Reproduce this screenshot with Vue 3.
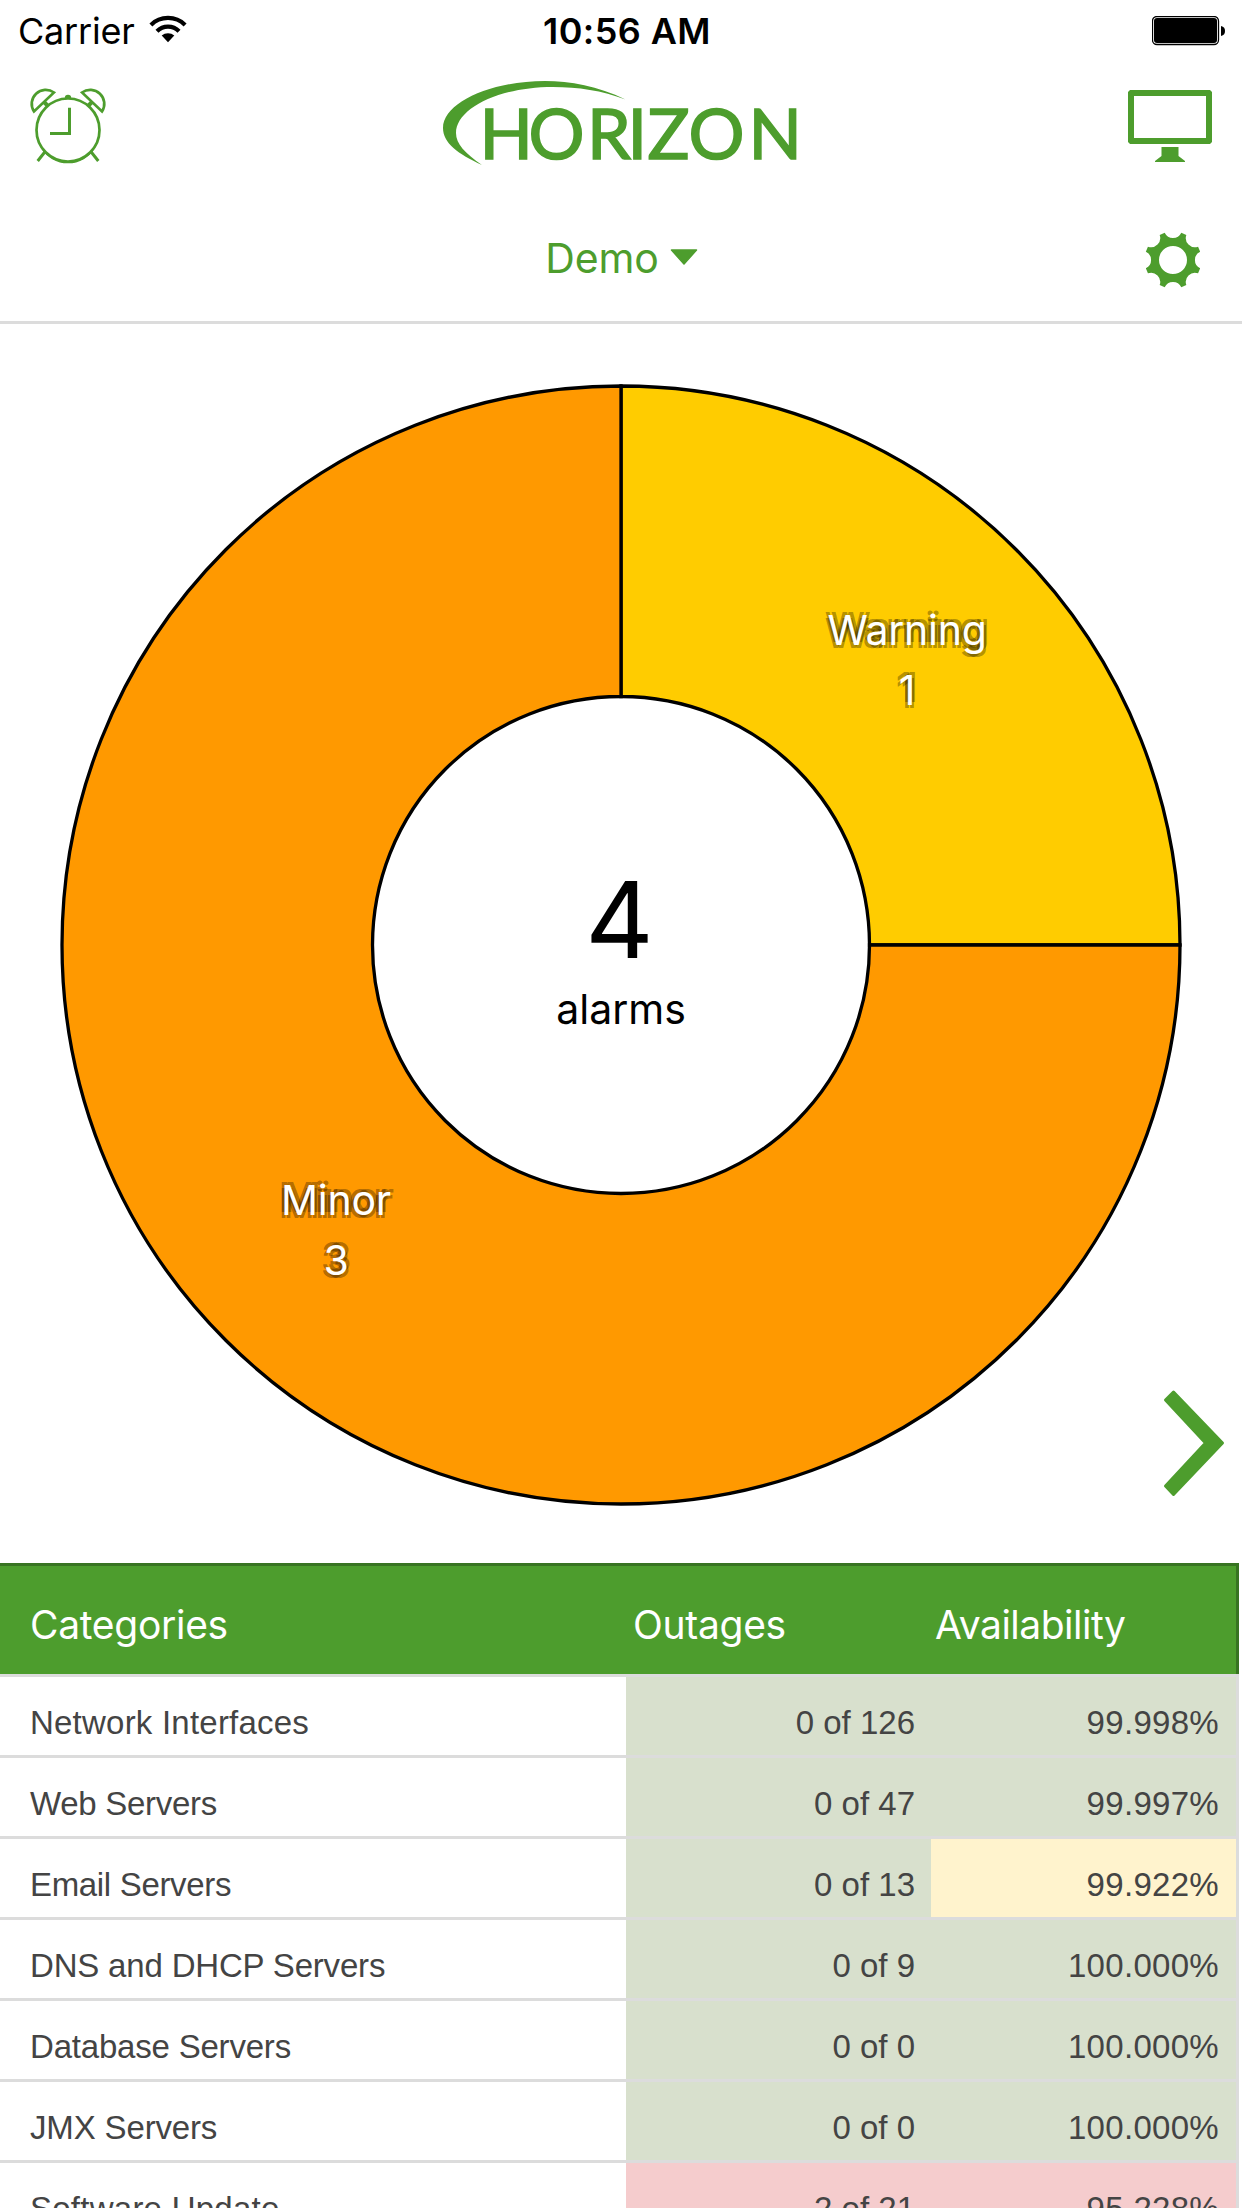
<script setup>
const point = (radius, degrees) => {
  const a = (degrees * Math.PI) / 180
  return `${(29 + radius * Math.sin(a)).toFixed(2)} ${(29 - radius * Math.cos(a)).toFixed(2)}`
}

// Eight teeth separated by scooped notches, with a round hole in the middle.
let gear = ''
for (let i = 0; i < 8; i++) {
  const a = i * 45
  gear += `${i ? 'L' : 'M'}${point(28.4, a - 17)} A9.2 9.2 0 0 0 ${point(28.4, a + 17)} `
}
gear += 'Z M43 29 A14 14 0 1 0 15 29 A14 14 0 1 0 43 29 Z'

const rows = [
  { name: 'Network Interfaces', outages: '0 of 126', availability: '99.998%', a: 'ok', b: 'ok', tracking: 0.22 },
  { name: 'Web Servers', outages: '0 of 47', availability: '99.997%', a: 'ok', b: 'ok', tracking: -0.28 },
  { name: 'Email Servers', outages: '0 of 13', availability: '99.922%', a: 'ok', b: 'warn', tracking: -0.33 },
  { name: 'DNS and DHCP Servers', outages: '0 of 9', availability: '100.000%', a: 'ok', b: 'ok', tracking: -0.18 },
  { name: 'Database Servers', outages: '0 of 0', availability: '100.000%', a: 'ok', b: 'ok', tracking: -0.2 },
  { name: 'JMX Servers', outages: '0 of 0', availability: '100.000%', a: 'ok', b: 'ok', tracking: -0.15 },
  { name: 'Software Update', outages: '2 of 21', availability: '95.228%', a: 'bad', b: 'bad', tracking: 0.25 }
]
</script>

<template>
  <div class="screen">
    <div class="status">
      <div class="carrier">
        <span class="carrier-name">Carrier</span>
        <svg width="38" height="28" viewBox="0 0 38 28">
          <g fill="none" stroke="#000" stroke-width="4.2">
            <path d="M1.9 9.9 A24.4 24.4 0 0 1 36.1 9.9" />
            <path d="M8 16.3 A15.4 15.4 0 0 1 30 16.3" />
          </g>
          <path d="M19 27.2 L12.7 20.6 A9.3 9.3 0 0 1 25.3 20.6 Z" />
        </svg>
      </div>
      <div class="time">10:56 AM</div>
      <div class="battery">
        <svg width="74" height="30" viewBox="0 0 74 30">
          <rect x="0.5" y="0.5" width="66" height="28" rx="4.5" fill="#fff" stroke="#000" stroke-width="1.3" />
          <rect x="2" y="2" width="63" height="25" rx="3" />
          <path d="M69 10 C72 10.5 73 12.5 73 15 C73 17.5 72 19.5 69 20 Z" />
        </svg>
      </div>
    </div>

    <header class="brand">
      <svg width="78" height="78" viewBox="29 87 78 78" fill="none" stroke="#4d9d2d">
        <circle cx="68" cy="130" r="31.5" stroke-width="2.7" />
        <path d="M42 149 A31.5 31.5 0 0 0 94 149 A32.5 32.5 0 0 1 42 149 Z" stroke-width="1.2" />
        <path d="M69.5 107.7 V133.5 H50" stroke-width="3" />
        <path d="M45.2 151.5 L37.7 161 M90.8 151.5 L98.3 161" stroke-width="3" />
        <path d="M54 92.5 A14.02 14.02 0 0 0 34 111.5 Z M82 92.5 A14.02 14.02 0 0 1 102 111.5 Z" stroke-width="2.7" />
        <path d="M43.5 101.5 L48 106 M92.5 101.5 L88 106" stroke-width="4" />
        <path d="M64.8 98 A3.2 3.2 0 0 1 71.2 98 Z" fill="#4d9d2d" stroke="none" />
      </svg>
      <svg class="logo" width="364" height="90" viewBox="440 78 364 90" fill="#4d9d2d">
        <path d="M625.5 99.5 C598 86 570 81 545 81 C490 81 443 103 443 128 C443 143 458 154 482 165 C465 153 456 144 456 133 C456 109 498 87 553 87 C578 87 602 90.5 625.5 99.5 Z" />
        <text class="wordmark" x="479.5 528.5 587 627.5 647.5 688.5 748.5" y="158.5">HORIZON</text>
      </svg>
      <svg width="84" height="78" viewBox="0 0 84 78" fill="#4d9d2d">
        <path fill-rule="evenodd" d="M2 3 H82 L84 5 V55 L82 57 H2 L0 55 V5 Z M6 9 V51 H78 V9 Z" />
        <path d="M33.5 60 H50.5 V69 L57 74 V75 H27 V74 L33.5 69 Z" />
      </svg>
    </header>

    <nav class="selector">
      <div class="server">
        <span class="server-name">Demo</span>
        <svg width="28" height="18" viewBox="0 0 28 18">
          <path d="M1.5 2 H26.5 L14 16 Z" fill="#4d9d2d" stroke="#4d9d2d" stroke-width="1.5" stroke-linejoin="round" />
        </svg>
      </div>
      <svg class="gear" width="58" height="58" viewBox="0 0 58 58">
        <path :d="gear" fill="#4d9d2d" fill-rule="evenodd" />
      </svg>
    </nav>

    <section class="chart">
      <svg class="donut" width="1242" height="1239" viewBox="0 324 1242 1239">
        <g stroke="#000" stroke-width="3.3">
          <path d="M621 386 A559 559 0 0 1 1180 945 H869.5 A248.5 248.5 0 0 0 621 696.5 Z" fill="#fc0" />
          <path d="M1180 945 A559 559 0 1 1 621 386 V696.5 A248.5 248.5 0 1 0 869.5 945 Z" fill="#f90" />
        </g>
        <path d="M1173.5 1392 L1222.5 1443 L1173.5 1494.5 L1165.5 1486 L1205.5 1443 L1165.5 1400 Z" fill="#4d9d2d" stroke="#4d9d2d" stroke-width="3" stroke-linejoin="round" />
      </svg>
      <div class="slice warning">Warning<br />1</div>
      <div class="slice minor">Minor<br />3</div>
      <div class="total">
        <div class="count">4</div>
        <div class="unit">alarms</div>
      </div>
    </section>

    <section class="table">
      <div class="row head">
        <div class="cell h1">Categories</div>
        <div class="cell h2">Outages</div>
        <div class="cell h3">Availability</div>
      </div>
      <div v-for="row in rows" :key="row.name" class="row body">
        <div class="cell" :style="{ letterSpacing: row.tracking + 'px' }">{{ row.name }}</div>
        <div class="cell num" :class="row.a">{{ row.outages }}</div>
        <div class="cell num percent" :class="row.b">{{ row.availability }}</div>
      </div>
    </section>
  </div>
</template>

<style>
body {
  margin: 0;
  background: #fff;
}
</style>

<style scoped>
.screen {
  width: 1242px;
  height: 2208px;
  overflow: hidden;
  background: #fff;
  font-family: Inter, sans-serif;
  color: #000;
}
svg {
  display: block;
  flex: none;
}
.status {
  display: grid;
  grid-template-columns: 1fr auto 1fr;
  height: 60px;
  box-sizing: border-box;
  padding: 0 16px 0 18px;
  font-size: 36px;
  line-height: 63px;
}
.carrier {
  display: flex;
  gap: 16px;
}
.carrier-name {
  width: 115px;
  letter-spacing: -0.2px;
}
.carrier svg {
  margin-top: 15px;
}
.time {
  padding-left: 10px;
  font-weight: 600;
  letter-spacing: 0.4px;
}
.battery {
  display: flex;
  justify-content: flex-end;
  padding-top: 16px;
}
.brand {
  display: flex;
  justify-content: space-between;
  align-items: flex-start;
  height: 128px;
  box-sizing: border-box;
  padding: 18px 30px 0 29px;
}
.brand svg:first-child,
.brand svg:last-child {
  margin-top: 9px;
}
.brand .logo {
  margin-left: 9px;
  overflow: visible;
}
.wordmark {
  font-family: Lato, sans-serif;
  font-size: 70px;
  stroke: #4d9d2d;
  stroke-width: 1.6px;
}
.selector {
  display: grid;
  grid-template-columns: 1fr auto 1fr;
  height: 136px;
  box-sizing: border-box;
  border-bottom: 3px solid #dcdcdc;
}
.server {
  grid-column: 2;
  display: flex;
  gap: 11px;
  padding-left: 1px;
  color: #4d9d2d;
  font-size: 41px;
  line-height: 141px;
}
.server-name {
  letter-spacing: -0.1px;
}
.server svg {
  margin-top: 60px;
}
.gear {
  justify-self: end;
  margin: 43px 40px 0 0;
}
.chart {
  position: relative;
  height: 1239px;
}
.slice {
  position: absolute;
  width: 240px;
  text-align: center;
  color: #fff;
  font-size: 41px;
  line-height: 60px;
  letter-spacing: -0.25px;
  text-shadow: 2px 3px rgba(0, 0, 0, 0.3), -3px 3px rgba(0, 0, 0, 0.3),
    3px -3px rgba(0, 0, 0, 0.3), -3px -3px rgba(0, 0, 0, 0.3);
}
.warning {
  left: 787px;
  top: 276px;
}
.minor {
  left: 216px;
  top: 846px;
}
.total {
  position: absolute;
  left: 471px;
  top: 531px;
  width: 300px;
  text-align: center;
}
.count {
  margin-left: -3px;
  font-size: 106px;
  line-height: 129px;
}
.unit {
  font-size: 41px;
  line-height: 50px;
}
.table {
  width: 1239px;
}
.row {
  display: grid;
  grid-template-columns: 626px 305px 305px;
  grid-template-rows: 100%;
  box-sizing: border-box;
}
.head {
  height: 111px;
  background: #4d9d2d;
  border-top: 3px solid #387422;
  border-right: 3px solid #387422;
  color: #fff;
  font-size: 39px;
  line-height: 117px;
  letter-spacing: -0.3px;
}
.body {
  height: 81px;
  border-top: 3px solid #dcdcdc;
  border-right: 3px solid #dcdcdc;
  font-family: "Liberation Sans", sans-serif;
  font-size: 33px;
  line-height: 92px;
  color: #444;
}
.cell {
  height: 100%;
  padding-left: 30px;
  white-space: nowrap;
}
.h2 {
  padding-left: 7px;
}
.h3 {
  padding-left: 4px;
  letter-spacing: -0.5px;
}
.num {
  box-sizing: border-box;
  padding: 0 16px 0 0;
  text-align: right;
}
.percent {
  padding-right: 17px;
  letter-spacing: 0.3px;
}
.ok {
  background: #d8e0cd;
}
.warn {
  background: #fff3cd;
}
.bad {
  background: #f5cccd;
}
</style>
